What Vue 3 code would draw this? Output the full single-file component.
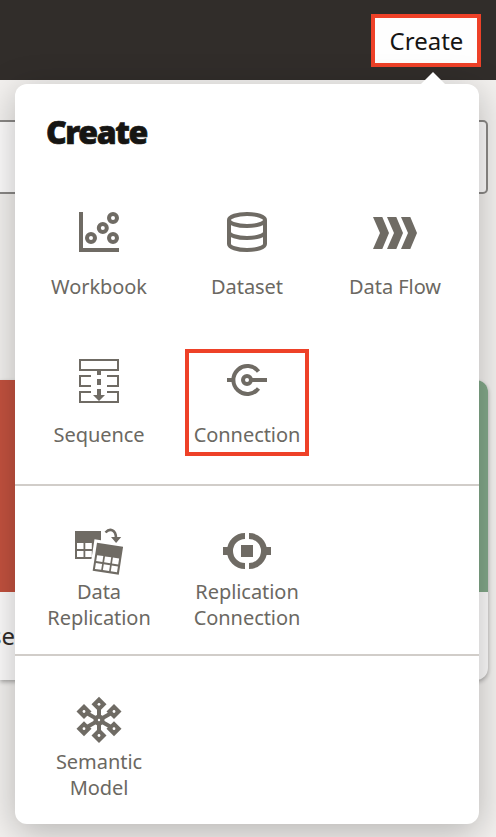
<script setup>
const groups = [
  [
    { icon: 'workbook', lines: ['Workbook'] },
    { icon: 'dataset', lines: ['Dataset'] },
    { icon: 'flow', lines: ['Data Flow'] },
    { icon: 'sequence', lines: ['Sequence'] },
    { icon: 'connection', lines: ['Connection'], marked: true }
  ],
  [
    { icon: 'replication', lines: ['Data', 'Replication'] },
    { icon: 'replconn', lines: ['Replication', 'Connection'] }
  ],
  [{ icon: 'semantic', lines: ['Semantic', 'Model'] }]
]
const nodes = [[24, 8.3], [39, 15.5], [39, 32.7], [24, 39.5], [9, 32.7], [9, 15.5]]
</script>

<template>
  <div class="page">
    <header class="topbar">
      <button class="create">Create</button>
    </header>
    <main class="content">
      <div class="search"></div>
      <div class="cards">
        <article class="card left">
          <div class="cover red"></div>
          <div class="caption">se</div>
        </article>
        <article class="card right">
          <div class="cover green"></div>
          <div class="caption"></div>
        </article>
      </div>
    </main>

    <section class="popup">
      <h2>Create</h2>
      <div v-for="(group, g) in groups" :key="g" class="group" :class="'group-' + g">
        <div v-for="item in group" :key="item.icon" class="item" :class="{ marked: item.marked }">
          <svg v-if="item.icon === 'workbook'" class="icon" viewBox="0 0 48 48">
            <path class="fill" d="M4 4h4v36h36v4H4z" />
            <g class="line w4">
              <circle cx="16" cy="30" r="4" /><circle cx="27.8" cy="20" r="4" />
              <circle cx="38" cy="10" r="4" /><circle cx="38" cy="30" r="4" />
            </g>
          </svg>
          <svg v-else-if="item.icon === 'dataset'" class="icon" viewBox="0 0 48 48">
            <g class="line w4">
              <ellipse cx="24" cy="12" rx="18" ry="6" />
              <path d="M6 12v24c0 3.300 8 6 18 6s18-2.700 18-6V12M6 24c0 3.300 8 6 18 6s18-2.700 18-6" />
            </g>
          </svg>
          <svg v-else-if="item.icon === 'flow'" class="icon" viewBox="0 0 48 48">
            <path class="fill" d="M2 9h9.300l6.700 16-6.700 16H2l7-16zM16 9h9.300l6.700 16-6.700 16H16l7-16zM30 9h9.300l6.700 16-6.700 16H30l7-16z" />
          </svg>
          <svg v-else-if="item.icon === 'sequence'" class="icon" viewBox="0 0 48 48">
            <path class="line w2" d="M5 4h38v10H5zM16 20H5v10h11M32 20h11v10H32M16 36H5v10h38V36H32" />
            <path class="fill" d="M22 15h4v4h-4zM22 23h4v6h-4zM22 33h4v6h4l-6 6-6-6h4z" />
          </svg>
          <svg v-else-if="item.icon === 'connection'" class="icon" viewBox="0 0 48 48">
            <path class="line w4" d="M4 24h6M28 24h16M35.500 15.500A14 14 0 1 0 35.500 32.500" />
            <circle class="line w4" cx="24" cy="24" r="4" />
          </svg>
          <svg v-else-if="item.icon === 'replication'" class="icon" viewBox="0 0 48 48">
            <path class="fill" d="M0 4h26v28H0z" />
            <path class="paper" d="M2 16h6.500v6H2zM10.300 16h6.500v6h-6.500zM2 24h6.500v6H2zM10.300 24h6.500v6h-6.500z" />
            <g transform="translate(22 15.700) rotate(8.800)">
              <path class="paper" d="M-3-3h32v12H27V28.500H-3z" />
              <path class="fill" d="M0 0h26.400v28.300H0z" />
              <path class="paper" d="M2 12.300h6.300v6H2zM10 12.300h6.300v6H10zM18 12.300h6.300v6H18zM2 20.200h6.300v6H2zM10 20.200h6.300v6H10zM18 20.200h6.300v6H18z" />
            </g>
            <path class="line arrow" d="M30.500 5.500C35 .500 41 3 41 11" />
            <path class="fill" d="M36 10h10.200L41.100 16z" />
          </svg>
          <svg v-else-if="item.icon === 'replconn'" class="icon" viewBox="0 0 48 48">
            <path class="line w6" d="M22 9a15 15 0 0 0 0 30M26 9a15 15 0 0 1 0 30" />
            <path class="fill" d="M0 20h6v8H0zM42 20h6v8h-6zM18 18h12v12H18z" />
          </svg>
          <svg v-else class="icon" viewBox="0 0 48 48">
            <path class="line w4" d="M24 8v32M9 15.500l30 17.200M39 15.500L9 32.700" />
            <circle class="fill" cx="24" cy="24" r="5.500" />
            <circle class="paper" cx="24" cy="24" r="1.200" />
            <g v-for="(n, i) in nodes" :key="i" :transform="`translate(${n[0]} ${n[1]})`">
              <path class="fill" d="M0-7.500L7.500 0 0 7.500-7.500 0z" />
              <circle class="paper" r="1.400" />
            </g>
          </svg>
          <div class="label">
            <span v-for="line in item.lines" :key="line">{{ line }}</span>
          </div>
        </div>
      </div>
    </section>
  </div>
</template>

<style>
body { margin: 0; }
</style>

<style scoped>
.page {
  position: relative;
  width: 496px;
  height: 837px;
  overflow: hidden;
  background: #f3f1ef;
  font-family: "Noto Sans", "Open Sans", sans-serif;
}
.topbar {
  box-sizing: border-box;
  display: flex;
  justify-content: flex-end;
  height: 80px;
  padding: 14px 15px 0 0;
  background: #312d2a;
}
.create {
  box-sizing: border-box;
  width: 110px;
  height: 53px;
  padding: 0 0 0 1px;
  border: 4px solid #ee4128;
  background: #fefefe;
  color: #161513;
  font: 400 24px/45px "Noto Sans", sans-serif;
}
.content { padding-top: 40px; }
.search {
  box-sizing: border-box;
  width: 492px;
  height: 74px;
  margin-left: -4px;
  border: 2px solid #8b8987;
  border-radius: 5px;
  background: #fdfcfc;
}
.cards {
  display: flex;
  justify-content: space-between;
  width: 488px;
  margin-top: 186px;
}
.card {
  width: 220px;
  height: 300px;
  overflow: hidden;
  border-radius: 0 12px 12px 0;
  background: #fdfcfc;
  box-shadow: 0 2px 4px rgba(0, 0, 0, 0.3);
}
.cover { height: 212px; }
.red { background: #c3523f; }
.green { background: #83a98a; }
.caption {
  margin-left: -10px;
  color: #312d2a;
  font-size: 24px;
  line-height: 88px;
}
.popup {
  position: absolute;
  top: 84px;
  left: 15px;
  width: 464px;
  height: 740px;
  border-radius: 12px;
  background: #fff;
  box-shadow: 0 8px 36px rgba(0, 0, 0, 0.26);
}
.popup::before {
  content: "";
  position: absolute;
  top: -12px;
  left: 406px;
  border: 12px solid transparent;
  border-top: 0;
  border-bottom-color: #fff;
}
h2 {
  height: 89px;
  box-sizing: border-box;
  margin: 0;
  padding: 26px 0 0 31px;
  color: #161513;
  font-size: 32px;
  font-weight: 900;
  line-height: 44px;
  letter-spacing: -1.4px;
  -webkit-text-stroke: 0.7px #161513;
}
.group {
  display: grid;
  grid-template-columns: repeat(3, 148px);
  box-sizing: border-box;
  padding-left: 10px;
}
.group-0 { height: 311px; grid-auto-rows: 148px; }
.group-1, .group-2 { border-top: 2px solid #d1cdc9; }
.group-1 { height: 170px; padding-top: 6px; }
.group-2 { padding-top: 5px; }
.item {
  position: relative;
  display: flex;
  flex-direction: column;
  align-items: center;
  padding-top: 35px;
}
.marked::after {
  content: "";
  position: absolute;
  top: 28px;
  left: 12px;
  box-sizing: border-box;
  width: 124px;
  height: 107px;
  border: 4px solid #ee4128;
}
.icon { display: block; width: 48px; height: 48px; }
.label {
  display: flex;
  flex-direction: column;
  align-items: center;
  margin-top: 18px;
  color: #6b6862;
  font-size: 20px;
  line-height: 26px;
  letter-spacing: -0.05px;
  white-space: nowrap;
}
.group-1 .label { margin-top: 4px; }
.group-2 .label { margin-top: 5px; }
.fill { fill: #6f6b64; }
.line { fill: none; stroke: #6f6b64; }
.paper { fill: #fff; }
.w2 { stroke-width: 2; }
.w4 { stroke-width: 4; }
.w6 { stroke-width: 6; }
.arrow { stroke-width: 2.6; }
</style>
